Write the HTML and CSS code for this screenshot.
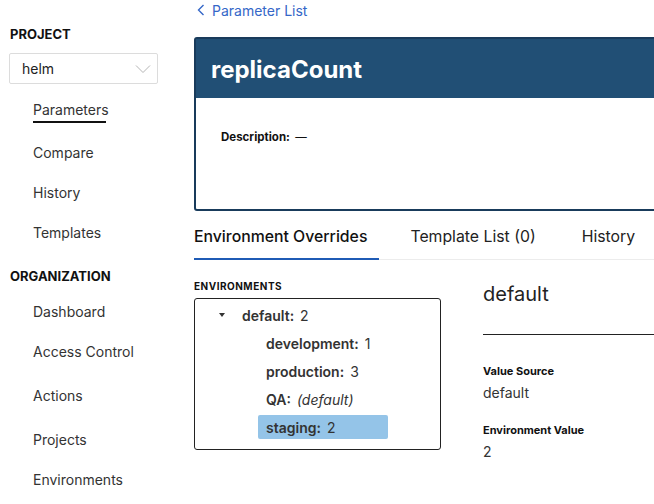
FILE: index.html
```html
<!DOCTYPE html>
<html lang="en">
<head>
    <meta charset="UTF-8">
    <meta name="viewport" content="width=device-width, initial-scale=1.0">
    <title>replicaCount</title>
    <link rel="stylesheet" href="styles.css">
</head>
<body>
    <div class="sidebar">
        <div class="section-title">PROJECT</div>
        <div class="project-select">
            <span>helm</span>
            <svg width="16" height="10" viewBox="0 0 16 10"><path d="M1 1.5 L8 8.5 L15 1.5" fill="none" stroke="#b5b5b5" stroke-width="1"/></svg>
        </div>
        <a class="nav-item active">Parameters</a>
        <a class="nav-item">Compare</a>
        <a class="nav-item">History</a>
        <a class="nav-item">Templates</a>

        <div class="section-title org">ORGANIZATION</div>
        <a class="nav-item first">Dashboard</a>
        <a class="nav-item tall">Access Control</a>
        <a class="nav-item tall">Actions</a>
        <a class="nav-item">Projects</a>
        <a class="nav-item">Environments</a>
    </div>

    <div class="main">
        <a class="back-link">
            <svg width="8" height="12" viewBox="0 0 8 12"><path d="M6.5 1 L1.5 6 L6.5 11" fill="none" stroke="#3567c8" stroke-width="1.4"/></svg>
            Parameter List
        </a>

        <div class="param-card">
            <div class="param-header">replicaCount</div>
            <div class="param-body">
                <span class="label">Description:</span>
                <span class="dash">&mdash;</span>
            </div>
        </div>

        <div class="tabs">
            <div class="tab active">Environment Overrides</div>
            <div class="tab">Template List (0)</div>
            <div class="tab last">History</div>
        </div>

        <div class="overrides">
            <div class="env-col">
                <div class="env-title">ENVIRONMENTS</div>
                <div class="env-tree">
                    <div class="tree-row parent">
                        <span class="caret"></span>
                        <b>default:</b><span class="val">2</span>
                    </div>
                    <div class="tree-row child"><b>development:</b><span class="val">1</span></div>
                    <div class="tree-row child"><b>production:</b><span class="val">3</span></div>
                    <div class="tree-row child"><b>QA:</b><i class="val">(default)</i></div>
                    <div class="tree-row child selected"><b>staging:</b><span class="val">2</span></div>
                </div>
            </div>
            <div class="detail-col">
                <div class="detail-name">default</div>
                <div class="detail-label">Value Source</div>
                <div class="detail-value">default</div>
                <div class="detail-label">Environment Value</div>
                <div class="detail-value">2</div>
            </div>
        </div>
    </div>
</body>
</html>
```

FILE: styles.css
```css
body {
    margin: 0;
    font-family: 'Inter', 'Noto Sans', sans-serif;
    color: #333;
    background-color: white;
    display: flex;
    overflow: hidden;
}

.sidebar {
    width: 194px;
    flex-shrink: 0;
    padding: 26px 0 0 10px;
    box-sizing: border-box;
}

.section-title {
    font-size: 13px;
    font-weight: bold;
    color: #111;
    line-height: 16px;
}

.section-title.org {
    margin-top: 15px;
}

.project-select {
    display: flex;
    justify-content: space-between;
    align-items: center;
    width: 149px;
    height: 31px;
    margin: 11px 0 0 -1px;
    padding: 0 6px 0 12px;
    border: 1px solid #dcdcdc;
    border-radius: 2px;
    box-sizing: border-box;
    font-size: 14px;
    color: #222;
}

.nav-item {
    display: block;
    height: 40px;
    line-height: 40px;
    padding-left: 23px;
    font-size: 14px;
    color: #333;
}

.nav-item.active {
    margin-top: 6px;
    position: relative;
    margin-bottom: 3px;
}

.nav-item.active::after {
    content: '';
    position: absolute;
    left: 23px;
    width: 73px;
    top: 31px;
    border-bottom: 2px solid #111;
}

.nav-item.first {
    margin-top: 8px;
}

.nav-item.tall {
    height: 44px;
}

.main {
    flex: 1;
    min-width: 0;
}

.back-link {
    display: flex;
    align-items: center;
    gap: 7px;
    height: 20px;
    padding-left: 3px;
    font-size: 14px;
    color: #3567c8;
}

.param-card {
    margin-top: 17px;
    width: 480px;
    border: 2px solid #193b5b;
    border-radius: 3px;
}

.param-header {
    background-color: #214f75;
    color: white;
    font-size: 24px;
    font-weight: bold;
    height: 59px;
    line-height: 62px;
    padding-left: 15px;
}

.param-body {
    height: 111px;
    padding: 32px 0 0 25px;
    box-sizing: border-box;
    font-size: 11.5px;
    color: #111;
}

.param-body .label {
    font-weight: bold;
}

.param-body .dash {
    margin-left: 2px;
}

.tabs {
    display: flex;
    gap: 31px;
    height: 48px;
    border-bottom: 1px solid #ececec;
}

.tab {
    padding-right: 12px;
    line-height: 51px;
    font-size: 15.8px;
    color: #222;
}

.tab.last {
    margin-left: 3px;
}

.tab.active {
    font-weight: 500;
    color: #111;
    border-bottom: 2px solid #1f5bb5;
    margin-bottom: -1px;
    height: 47px;
}

.overrides {
    display: flex;
    gap: 42px;
}

.env-title {
    margin-top: 20px;
    font-size: 10px;
    font-weight: bold;
    letter-spacing: 0.5px;
    line-height: 12px;
    color: #111;
}

.env-tree {
    margin-top: 6px;
    width: 247px;
    height: 152px;
    padding: 4px 0 0 15px;
    border: 1px solid #222;
    border-radius: 3px;
    box-sizing: border-box;
}

.tree-row {
    display: flex;
    align-items: center;
    height: 24px;
    margin-bottom: 4px;
    font-size: 14px;
    color: #333;
}

.tree-row b {
    font-weight: 600;
}

.tree-row .val {
    margin-left: 6px;
}

.tree-row.parent {
    padding-left: 8px;
}

.caret {
    width: 0;
    height: 0;
    border-left: 3.5px solid transparent;
    border-right: 3.5px solid transparent;
    border-top: 4px solid #333;
    margin-left: 1px;
    margin-right: 17px;
}

.tree-row.child {
    margin-left: 48px;
    width: 130px;
    padding-left: 8px;
    box-sizing: border-box;
    border-radius: 2px;
}

.tree-row.selected {
    background-color: #94c4e8;
}

.detail-col {
    flex: 1;
}

.detail-name {
    margin-top: 22px;
    font-size: 20px;
    line-height: 24px;
    height: 52px;
    border-bottom: 1px solid #222;
    color: #222;
    margin-bottom: 29px;
}

.detail-label {
    font-size: 11px;
    font-weight: bold;
    color: #111;
    line-height: 14px;
}

.detail-value {
    font-size: 14px;
    line-height: 20px;
    margin-top: 5px;
    margin-bottom: 20px;
    color: #333;
}
```
